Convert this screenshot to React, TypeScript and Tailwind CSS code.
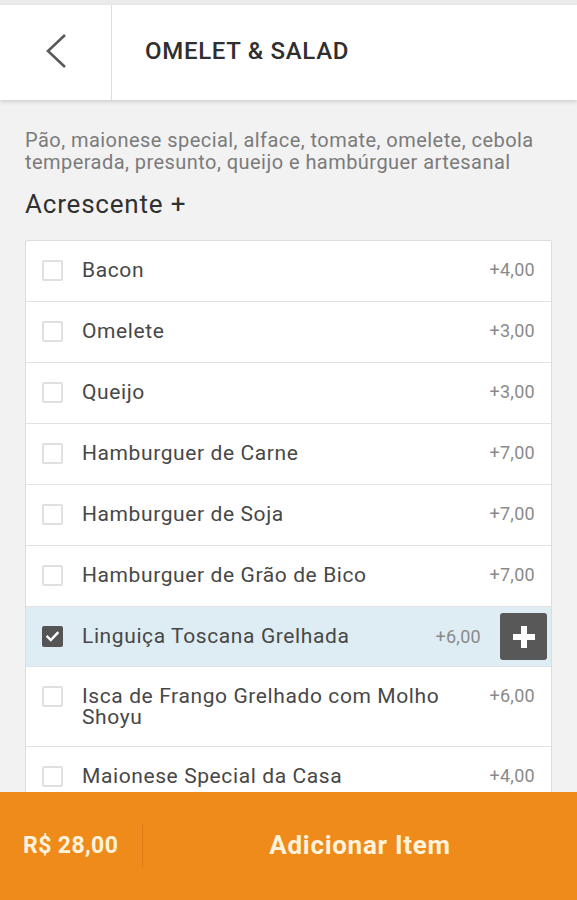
import React from "react";

type Item = { name: string; price: string; checked?: boolean };

const items: Item[] = [
  { name: "Bacon", price: "+4,00" },
  { name: "Omelete", price: "+3,00" },
  { name: "Queijo", price: "+3,00" },
  { name: "Hamburguer de Carne", price: "+7,00" },
  { name: "Hamburguer de Soja", price: "+7,00" },
  { name: "Hamburguer de Grão de Bico", price: "+7,00" },
  { name: "Linguiça Toscana Grelhada", price: "+6,00", checked: true },
  { name: "Isca de Frango Grelhado com Molho Shoyu", price: "+6,00" },
  { name: "Maionese Special da Casa", price: "+4,00" },
];

function Checkbox({ checked }: { checked?: boolean }) {
  if (checked) {
    return (
      <div className="w-[21px] h-[21px] rounded-[2px] bg-[#555555] flex items-center justify-center shrink-0">
        <svg width="13" height="11" viewBox="0 0 13 11">
          <path d="M1.5 5.8 L4.8 9 L11.5 2" fill="none" stroke="#ffffff" strokeWidth="2.4" strokeLinecap="square" />
        </svg>
      </div>
    );
  }
  return <div className="w-[21px] h-[21px] rounded-[2px] border-2 border-[#e0e0e0] bg-white shrink-0" />;
}

export default function App() {
  return (
    <div
      className="w-[577px] h-[900px] flex flex-col bg-[#f2f2f2] overflow-hidden"
      style={{ fontFamily: "Roboto, 'Noto Sans', sans-serif" }}
    >
      <div className="h-[5px] bg-[#ebebeb] shrink-0" />
      <div className="h-[95px] bg-white flex shrink-0 shadow-[0_2px_4px_rgba(0,0,0,0.14)] relative z-10">
        <div className="w-[112px] border-r border-[#dcdcdc] flex items-center justify-center">
          <svg width="24" height="36" viewBox="0 0 24 36" className="ml-[3px] mt-[-3px]">
            <polyline points="20,2 3,18 20,34" fill="none" stroke="#5a5a5a" strokeWidth="2.6" />
          </svg>
        </div>
        <div className="flex items-center pl-[33px] pb-[3px]">
          <span className="text-[24px] font-medium text-[#2f2f2f] tracking-[0.7px]">OMELET &amp; SALAD</span>
        </div>
      </div>
      <div className="flex-1 overflow-hidden px-[25px] pt-[29px]">
        <p className="text-[20px] leading-[22px] text-[#7b7b7b] tracking-[0.45px]">
          Pão, maionese special, alface, tomate, omelete, cebola temperada, presunto, queijo e hambúrguer artesanal
        </p>
        <h2 className="text-[26px] leading-[30px] text-[#303030] tracking-[0.8px] mt-[16px] mb-[21px]">Acrescente +</h2>
        <div className="bg-white border border-[#dddddd] rounded-[2px]">
          {items.map((it, i) => (
            <div
              key={i}
              className={`flex items-start border-b border-[#e2e2e2] ${
                it.checked ? "bg-[#deedf3] pl-[16px] pr-[4px] py-[6px]" : "px-[16px] pt-[16px] pb-[18px]"
              }`}
            >
              <div className={`flex items-center ${it.checked ? "h-[47px]" : "h-[26px]"}`}>
                <Checkbox checked={it.checked} />
              </div>
              <div
                className={`flex-1 ml-[19px] text-[21px] leading-[21px] tracking-[0.6px] text-[#474747] ${
                  it.checked ? "self-center" : "pt-[3px]"
                } ${it.name.length > 30 ? "pr-[30px]" : ""}`}
              >
                {it.name}
              </div>
              {it.checked ? (
                <div className="flex items-center self-center">
                  <span className="text-[18px] tracking-[0.3px] text-[#8a8a8a]">{it.price}</span>
                  <div className="ml-[19px] w-[47px] h-[47px] rounded-[3px] bg-[#585858] flex items-center justify-center">
                    <svg width="22" height="22" viewBox="0 0 22 22">
                      <rect x="8" y="0" width="6" height="22" fill="#ffffff" />
                      <rect x="0" y="8" width="22" height="6" fill="#ffffff" />
                    </svg>
                  </div>
                </div>
              ) : (
                <span className="text-[18px] leading-[26px] tracking-[0.3px] text-[#8a8a8a]">{it.price}</span>
              )}
            </div>
          ))}
        </div>
      </div>
      <div className="h-[108px] bg-[#ee8b1a] flex items-center shrink-0">
        <div className="w-[143px] pl-[23px] text-[23px] font-bold tracking-[0.4px] text-[#fff3de] border-r border-[#dc7e14] h-[44px] flex items-center">
          R$ 28,00
        </div>
        <div className="flex-1 text-center text-[26px] font-bold tracking-[0.7px] text-[#fff3de] pb-[2px]">
          Adicionar Item
        </div>
      </div>
    </div>
  );
}
